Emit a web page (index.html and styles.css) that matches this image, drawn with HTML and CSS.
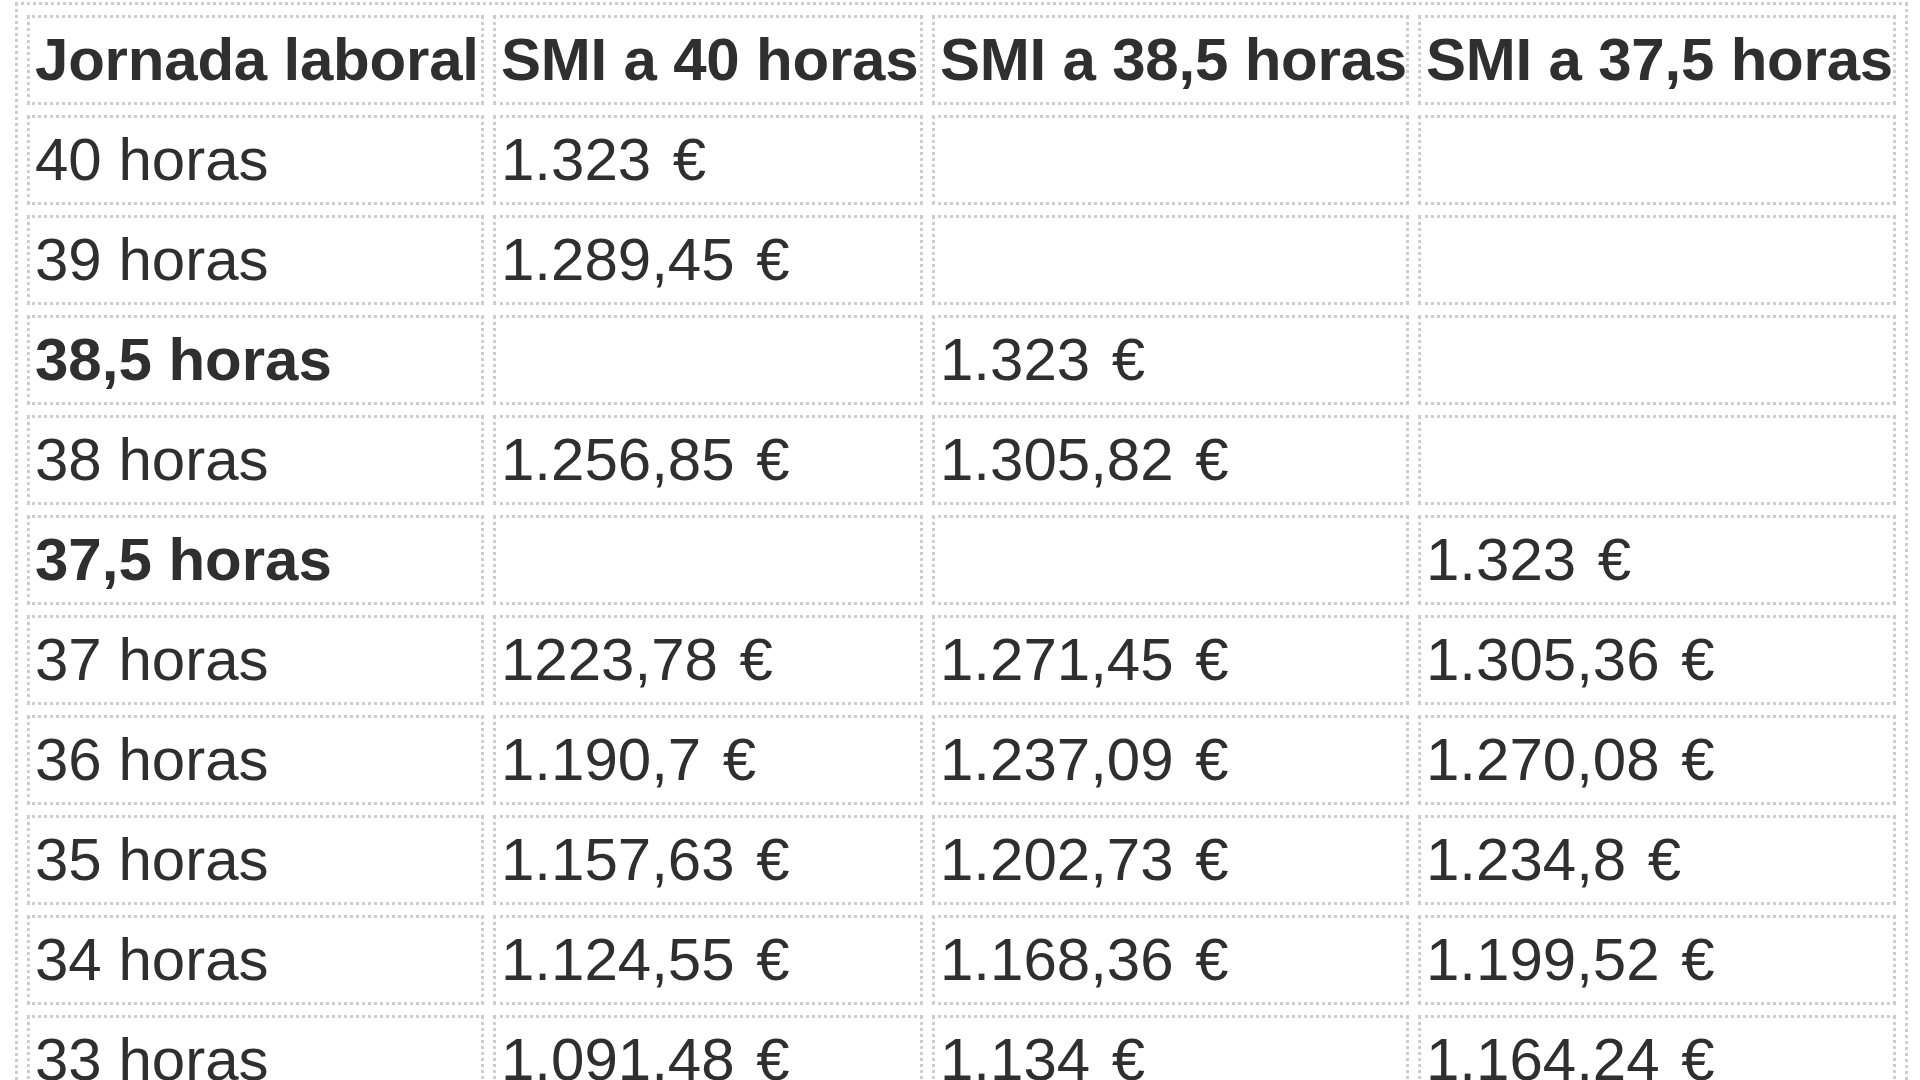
FILE: index.html
```html
<!DOCTYPE html>
<html lang="es">
<head>
<meta charset="utf-8">
<title>SMI por jornada laboral</title>
<link rel="stylesheet" href="styles.css">
</head>
<body>
<table class="smi">
  <thead>
    <tr>
      <th class="c1">Jornada laboral</th>
      <th class="c2">SMI a 40 horas</th>
      <th class="c3">SMI a 38,5 horas</th>
      <th class="c4">SMI a 37,5 horas</th>
    </tr>
  </thead>
  <tbody>
    <tr><td>40 horas</td><td>1.323 €</td><td></td><td></td></tr>
    <tr><td>39 horas</td><td>1.289,45 €</td><td></td><td></td></tr>
    <tr><td class="strong">38,5 horas</td><td></td><td>1.323 €</td><td></td></tr>
    <tr><td>38 horas</td><td>1.256,85 €</td><td>1.305,82 €</td><td></td></tr>
    <tr><td class="strong">37,5 horas</td><td></td><td></td><td>1.323 €</td></tr>
    <tr><td>37 horas</td><td>1223,78 €</td><td>1.271,45 €</td><td>1.305,36 €</td></tr>
    <tr><td>36 horas</td><td>1.190,7 €</td><td>1.237,09 €</td><td>1.270,08 €</td></tr>
    <tr><td>35 horas</td><td>1.157,63 €</td><td>1.202,73 €</td><td>1.234,8 €</td></tr>
    <tr><td>34 horas</td><td>1.124,55 €</td><td>1.168,36 €</td><td>1.199,52 €</td></tr>
    <tr><td>33 horas</td><td>1.091,48 €</td><td>1.134 €</td><td>1.164,24 €</td></tr>
  </tbody>
</table>
</body>
</html>
```

FILE: styles.css
```css
html, body {
  margin: 0;
  padding: 0;
  background: #ffffff;
  overflow: hidden;
}

body {
  font-family: "Liberation Sans", Arial, Helvetica, sans-serif;
  color: #2f2f2f;
}

.smi {
  margin: 2px 0 0 15px;
  width: 1893px;
  table-layout: fixed;
  border-collapse: separate;
  border-spacing: 9px 10px;
  border: 3px dotted #cdcdcd;
}

.smi th,
.smi td {
  box-sizing: border-box;
  height: 90px;
  padding: 0 0 0 5px;
  border: 3px dotted #cdcdcd;
  font-size: 60px;
  line-height: 1;
  text-align: left;
  vertical-align: middle;
  white-space: nowrap;
  overflow: hidden;
}

.smi th {
  font-weight: bold;
  letter-spacing: -0.2px;
}

.smi td {
  font-weight: normal;
}

.smi td + td {
  word-spacing: 5px;
}

.smi td.strong {
  font-weight: bold;
}

.c1 { width: 457px; }
.c2 { width: 430px; }
.c3 { width: 477px; }
.c4 { width: 478px; }
```
